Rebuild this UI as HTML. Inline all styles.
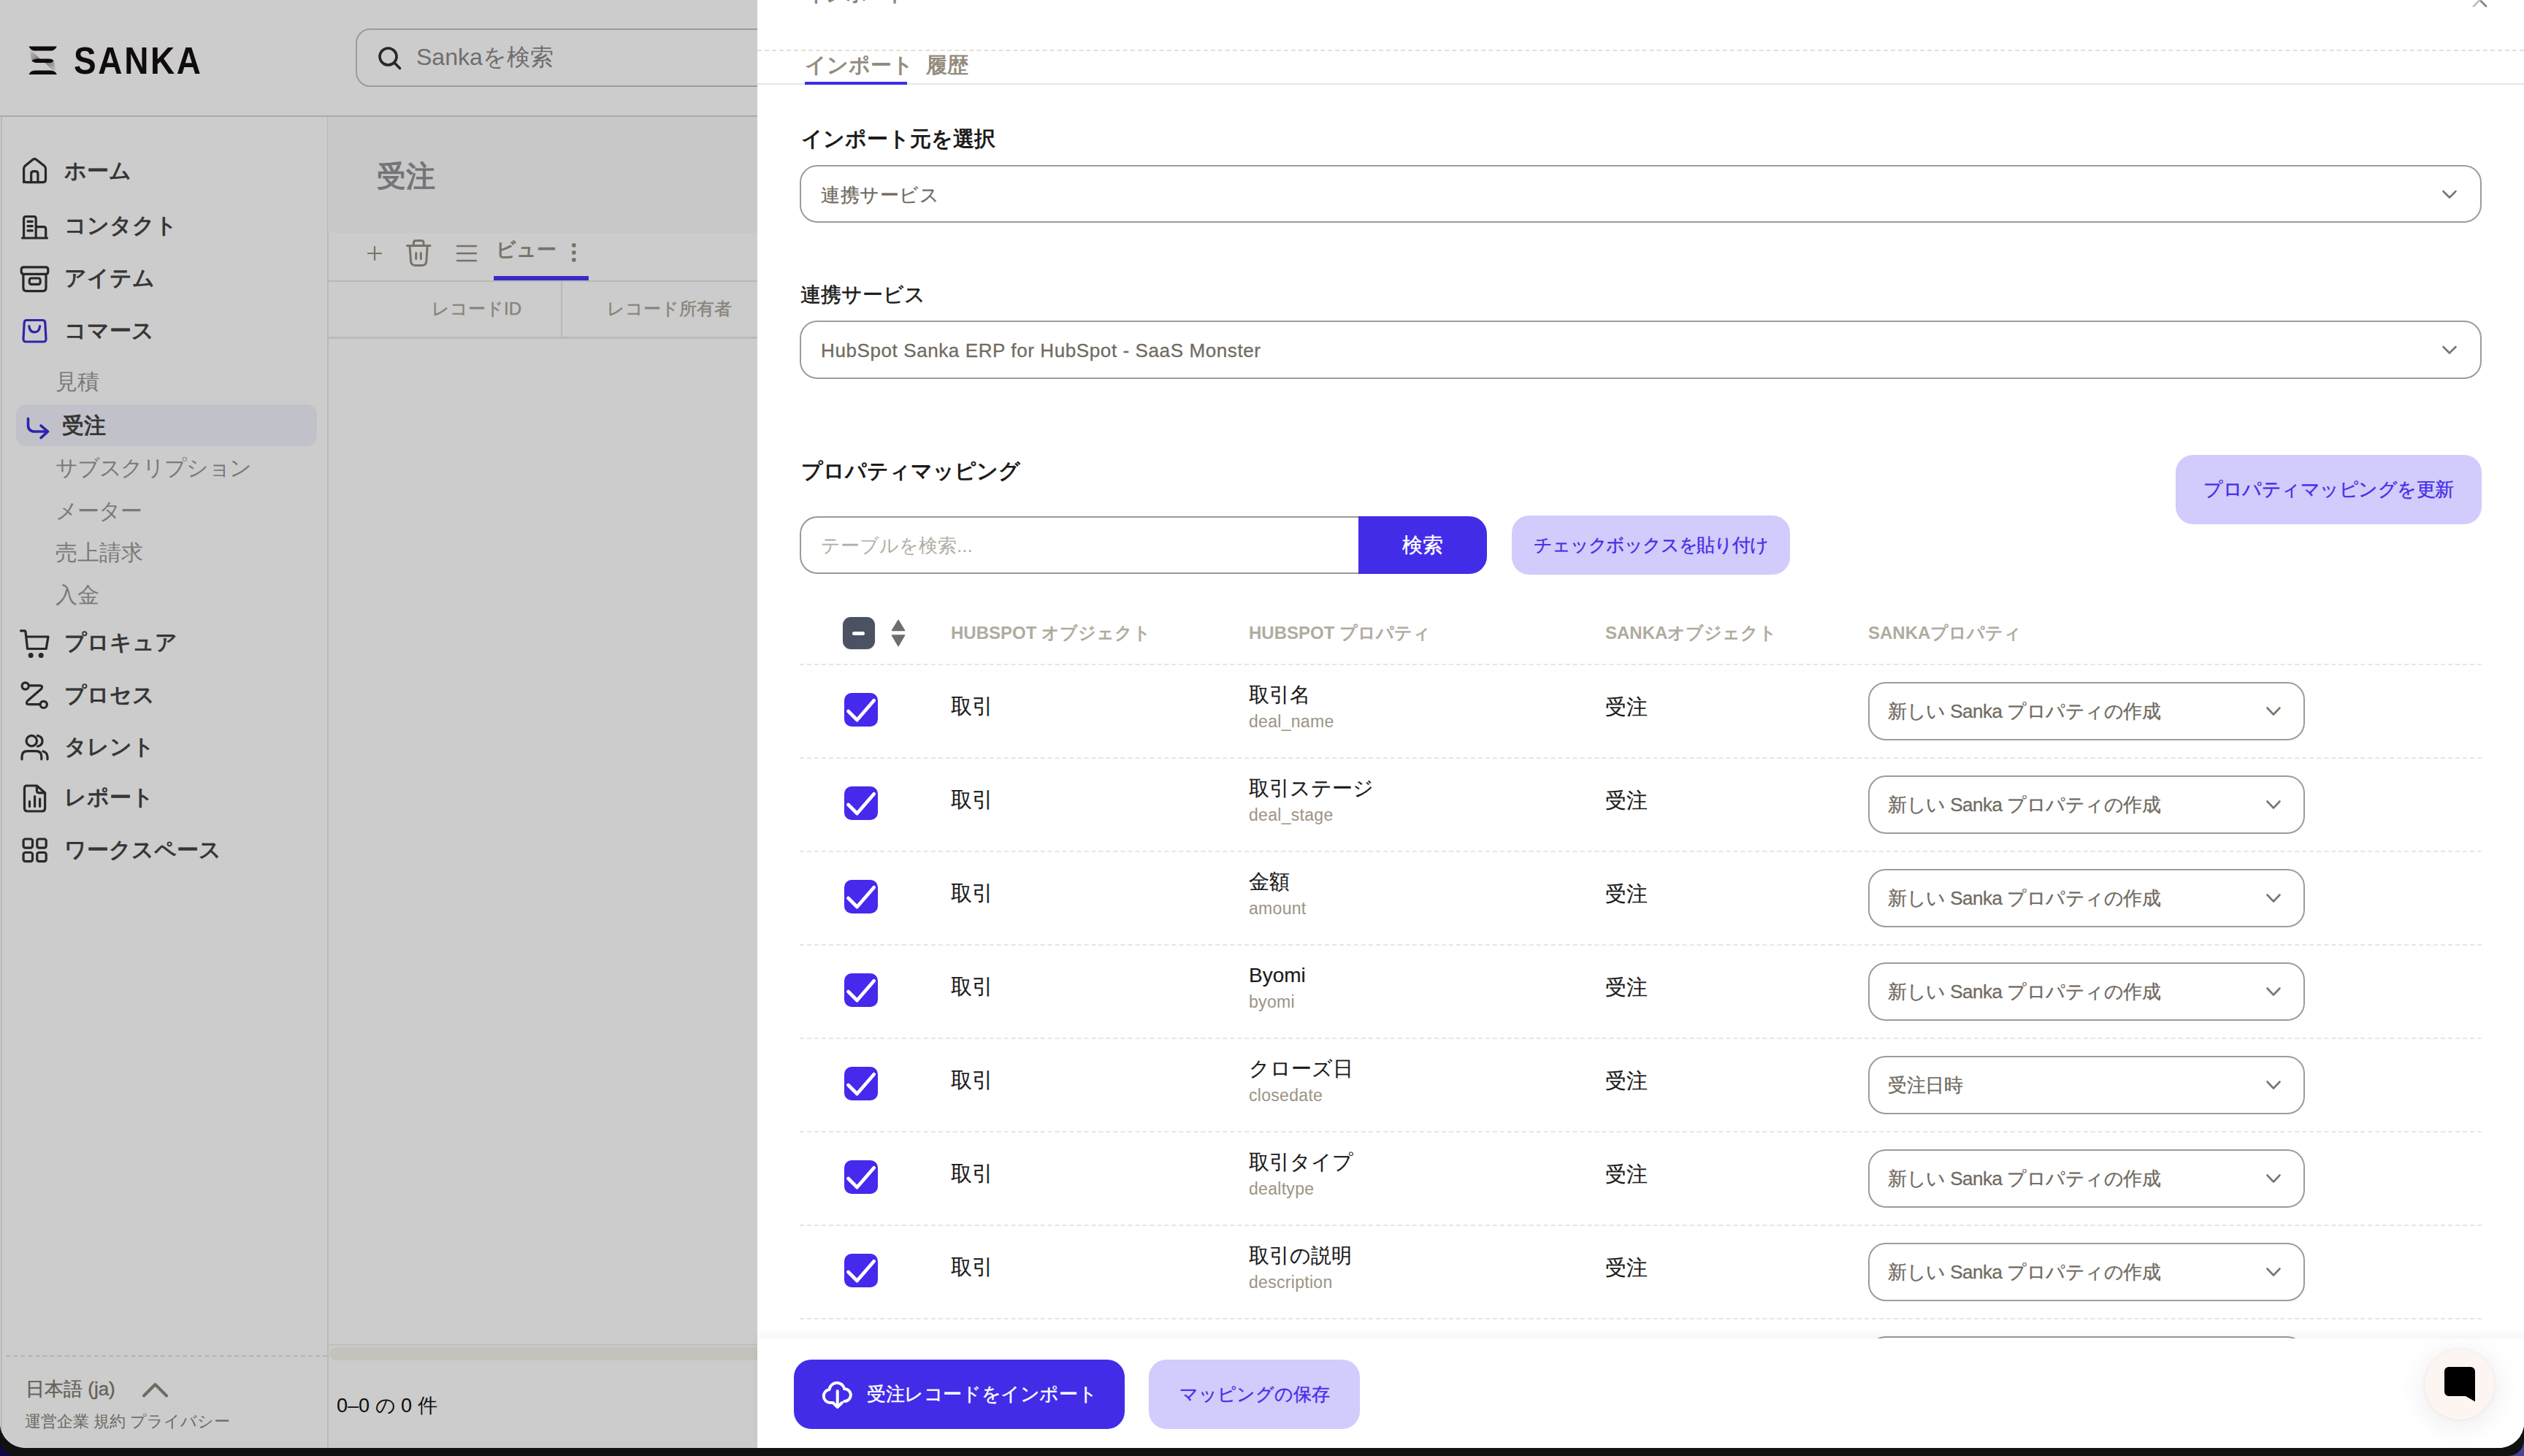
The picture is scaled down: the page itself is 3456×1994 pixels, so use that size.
<!DOCTYPE html>
<html lang="ja">
<head>
<meta charset="utf-8">
<style>
*{box-sizing:border-box;margin:0;padding:0}
html,body{width:3456px;height:1994px;overflow:hidden;background:#111}
body{position:relative;font-family:"Liberation Sans",sans-serif;}
.a{position:absolute;white-space:nowrap}
#win{position:absolute;left:0;top:0;width:3456px;height:1983px;border-radius:0 0 35px 35px;overflow:hidden;background:#fff}
#app{position:absolute;left:0;top:0;width:3456px;height:1983px;background:#fff}
#dim{position:absolute;left:0;top:0;width:3456px;height:1983px;background:rgba(0,0,0,0.2)}
#panel{position:absolute;left:1037px;top:0;width:2419px;height:1983px;background:#fff}
.nav{font-size:30px;font-weight:bold;color:#444;line-height:40px}
.sub{font-size:30px;color:#999;line-height:40px}
.ic{position:absolute}
.dd{position:absolute;border:2px solid #9d9c99;border-radius:24px;background:#fff}
.chev{position:absolute}
.hdr{font-size:24px;font-weight:bold;color:#b1ab9f;line-height:32px}
.dash{position:absolute;height:0;border-top:2px dashed #e6e6e6}
.cb{position:absolute;width:46px;height:46px;border-radius:10px;background:#4529ec}
.obj{font-size:29px;color:#1a1a1a;line-height:40px;-webkit-text-stroke:0.15px #1a1a1a}
.pname{font-size:28px;color:#1a1a1a;line-height:36px;-webkit-text-stroke:0.15px #1a1a1a}
.pkey{font-size:23px;color:#9c9383;line-height:28px;letter-spacing:0.3px;margin-top:1px}
.h{font-size:29px;font-weight:bold;color:#1c1b19;line-height:40px}
.lbl{font-size:28px;color:#1c1b19;line-height:40px;-webkit-text-stroke:0.5px #1c1b19}
.ddt{font-size:26px;color:#716b62;line-height:40px;letter-spacing:0.6px;-webkit-text-stroke:0.3px #716b62}
.btnl{background:#d1ccfb;color:#472ee8;-webkit-text-stroke:0.4px #472ee8;font-size:26px;border-radius:24px;display:flex;align-items:center;justify-content:center}
.btnp{background:#432ce8;color:#fff;-webkit-text-stroke:0.4px #fff;font-size:28px;border-radius:24px;display:flex;align-items:center;justify-content:center}
</style>
</head>
<body>
<div class="a" style="left:0;top:1954px;width:40px;height:40px;background:#0c0845"></div>
<div class="a" style="left:3416px;top:1954px;width:40px;height:40px;background:#4a4190"></div>
<div class="a" style="left:0;top:0;width:3456px;height:1994px;background:#111;border-radius:0 0 22px 22px"></div>
<div id="win">
 <div id="app">
  <!-- header -->
  <div class="a" style="left:0;top:158px;width:3456px;height:2px;background:#d6d6d6"></div>
    <div class="a" style="left:101px;top:56px;font-size:51px;font-weight:bold;letter-spacing:3px;color:#150f0e;line-height:56px;transform:scaleX(0.9);transform-origin:0 0">SANKA</div>
  <div class="a" style="left:487px;top:39px;width:1200px;height:80px;border:2px solid #c4c4c4;border-radius:20px"></div>
    <div class="a" style="left:570px;top:58px;font-size:32px;color:#8a8a8a;line-height:40px">Sankaを検索</div>
  <!-- sidebar -->
  <div class="a" style="left:448px;top:160px;width:2px;height:1823px;background:#e8e8e8"></div>
  <div class="a" style="left:1px;top:160px;width:2px;height:1823px;background:#e6e6e6"></div>
  <div class="a nav" style="left:88px;top:214px">ホーム</div>
  <div class="a nav" style="left:88px;top:289px">コンタクト</div>
  <div class="a nav" style="left:88px;top:361px">アイテム</div>
  <div class="a nav" style="left:88px;top:433px">コマース</div>
  <div class="a sub" style="left:76px;top:503px">見積</div>
  <div class="a" style="left:22px;top:554px;width:412px;height:57px;background:#f2f2fd;border-radius:14px"></div>
  <div class="a nav" style="left:85px;top:563px">受注</div>
  <div class="a sub" style="left:76px;top:621px;letter-spacing:-1.2px">サブスクリプション</div>
  <div class="a sub" style="left:76px;top:680px;letter-spacing:-1px">メーター</div>
  <div class="a sub" style="left:76px;top:737px">売上請求</div>
  <div class="a sub" style="left:76px;top:795px">入金</div>
  <div class="a nav" style="left:88px;top:860px">プロキュア</div>
  <div class="a nav" style="left:88px;top:932px">プロセス</div>
  <div class="a nav" style="left:88px;top:1003px">タレント</div>
  <div class="a nav" style="left:88px;top:1072px">レポート</div>
  <div class="a nav" style="left:88px;top:1144px">ワークスペース</div>
  <div class="a" style="left:8px;top:1856px;width:440px;border-top:2px dashed #e0e0e0"></div>
  <div class="a" style="left:35px;top:1884px;font-size:26px;color:#7f7a6f;line-height:36px;-webkit-text-stroke:0.4px #7f7a6f">日本語 (ja)</div>
  <div class="a" style="left:34px;top:1931px;font-size:22px;color:#8a857a;line-height:32px">運営企業 規約 プライバシー</div>
  <!-- main -->
  <div class="a" style="left:449px;top:160px;width:3007px;height:159px;background:#fafafa"></div>
  <div class="a" style="left:516px;top:216px;font-size:40px;font-weight:bold;color:#919196;line-height:50px">受注</div>
  <div class="a" style="left:449px;top:384px;width:3007px;height:2px;background:#e6e6e6"></div>
  <div class="a" style="left:676px;top:378px;width:130px;height:6px;background:#4836f4"></div>
  <div class="a" style="left:679px;top:322px;font-size:27px;font-weight:bold;color:#978f83;line-height:40px">ビュー</div>
  <div class="a" style="left:449px;top:461px;width:3007px;height:3px;background:#e9e9e9"></div>
  <div class="a" style="left:768px;top:386px;width:2px;height:76px;background:#e6e6e6"></div>
  <div class="a" style="left:591px;top:407px;font-size:24px;color:#aca59a;line-height:32px;-webkit-text-stroke:0.4px #aca59a">レコードID</div>
  <div class="a" style="left:831px;top:407px;font-size:24px;color:#aca59a;line-height:32px;-webkit-text-stroke:0.4px #aca59a">レコード所有者</div>
  <div class="a" style="left:449px;top:1841px;width:3007px;height:2px;background:#eeeeee"></div>
  <div class="a" style="left:451px;top:1845px;width:3000px;height:18px;background:#f7f3ec;border-radius:9px"></div>
  <div class="a" style="left:461px;top:1905px;font-size:27px;color:#111;line-height:40px">0–0 の 0 件</div>
  <svg class="ic" style="left:0;top:0" width="1037" height="1983" viewBox="0 0 1037 1983">
   <defs><linearGradient id="lg1" x1="0" y1="0" x2="1" y2="1"><stop offset="0" stop-color="#f4f4f4"/><stop offset="1" stop-color="#8a8a8a"/></linearGradient><linearGradient id="lg2" x1="0" y1="0" x2="1" y2="1"><stop offset="0" stop-color="#8a8a8a"/><stop offset="1" stop-color="#f0f0f0"/></linearGradient></defs>
   <path d="M40.6 69.4L44 70L55 80.6L43.6 84Z" fill="url(#lg1)"/>
   <path d="M61.5 85.8L73.8 83.5L76 96.6L72 96.4Z" fill="url(#lg2)"/>
   <path d="M39.3 63.4H77.9L76 66.5Q74 69.6 68 69.6H49Q43 69.6 41.5 66.5Z" fill="#150f0e"/>
   <path d="M43.5 83.2Q46 80.4 51 80.4H67Q72 80.4 73.3 83.2Q72 86 67 86H51Q46 86 43.5 83.2Z" fill="#150f0e"/>
   <path d="M39.3 102H77.9L76 99Q74 96.4 68 96.4H49Q43 96.4 41.5 99Z" fill="#150f0e"/>
   <g fill="none" stroke="#333" stroke-width="3.2" stroke-linecap="round" stroke-linejoin="round">
    <circle cx="531.5" cy="77.5" r="11.5" stroke-width="3.6"/><path d="M540 86l7.5 7.5" stroke-width="3.6"/>
    <path d="M32.6 249.6V231Q32.6 228.6 34.5 227L45 218.5Q47.3 216.8 49.6 218.5L60.5 227Q62.5 228.6 62.5 231V246Q62.5 249.6 59 249.6H36Q32.6 249.6 32.6 246Z"/>
    <path d="M42.7 249.6V238Q42.7 234.6 46 234.6H48.6Q51.9 234.6 51.9 238V249.6"/>
    <path d="M30.5 326H64.5 M32.6 326V299.5Q32.6 296.5 35.6 296.5H46.2Q49.2 296.5 49.2 299.5V326 M49.2 310.6H59.7Q62.7 310.6 62.7 313.6V326 M38 303.3H44.3 M38 309.6H44.3 M38 315.9H44.3"/>
    <path d="M32.5 365.8H62.5Q65.8 365.8 65.8 369V372Q65.8 375.4 62.5 375.4H32.5Q29.2 375.4 29.2 372V369Q29.2 365.8 32.5 365.8Z M31.9 375.4V394Q31.9 398.6 36.5 398.6H58.4Q63 398.6 63 394V375.4 M42.5 381H53Q55.2 381 55.2 385.1Q55.2 389.3 53 389.3H42.5Q40.2 389.3 40.2 385.1Q40.2 381 42.5 381Z"/>
    <path d="M36.5 438.5H58Q61.6 438.5 61.8 442L63 464Q63.2 468 59.5 468H35.5Q31.8 468 32 464L33.2 442Q33.4 438.5 36.5 438.5Z M39.8 446.5Q40.5 454.8 47.2 454.8Q54 454.8 54.6 446.5" stroke="#3a2ed8"/>
    <path d="M38.5 573.2V582Q38.5 591 47.5 591H65.6 M56 582.8L65.6 591 56 599.6" stroke="#3a2ed8" stroke-width="3.6"/>
    <path d="M28.5 863.8H33.5Q34.8 863.8 35 865.5L37.6 888.5H63.2L66 872H35.6"/>
    <circle cx="42.2" cy="897.4" r="1.9" fill="#333"/><circle cx="56.2" cy="897.4" r="1.9" fill="#333"/>
    <circle cx="34.7" cy="939.5" r="4.6"/><circle cx="59.7" cy="964.9" r="4.6"/>
    <path d="M40.5 938.8H54.3Q59.5 938.8 56.7 943.3L37.5 960Q34.5 964.6 39.7 964.6H53.5"/>
    <circle cx="43.3" cy="1014.6" r="7.2"/>
    <path d="M30 1039.8V1036.5Q30 1028.7 37.6 1028.7H49.2Q56.8 1028.7 56.8 1036.5V1039.8 M51.5 1007.5Q58 1009 58 1014.8Q58 1020.6 51.5 1022.2 M65 1039.8V1036.5Q64.7 1030.5 59 1029"/>
    <path d="M36.6 1076H50.4L61.6 1085.8V1107Q61.6 1111 57.6 1111H37.6Q33.5 1111 33.5 1107V1079.5Q33.5 1076 36.6 1076Z M50.4 1076V1082.5Q50.4 1085.8 53.5 1085.8H61.6 M40.5 1104.5V1097.5 M47.6 1104.5V1090.5 M54.6 1104.5V1094"/>
    <rect x="32.1" y="1149" width="12.4" height="12.2" rx="2.6"/><rect x="50.8" y="1149" width="12.4" height="12.2" rx="2.6"/>
    <rect x="32.1" y="1167.5" width="12.4" height="12.2" rx="2.6"/><rect x="50.8" y="1167.5" width="12.4" height="12.2" rx="2.6"/>
    <path d="M197 1911.5L212.5 1896 228 1911.5" stroke="#8a857a" stroke-width="4"/>
   </g>
   <g fill="none" stroke="#978f83" stroke-linecap="round" stroke-linejoin="round">
    <path d="M513 338V356 M504 347H522" stroke-width="2.2"/>
    <path d="M557.5 336.5H589 M561 336.5L562.6 358Q563 363.4 568.5 363.4H578Q583.4 363.4 583.8 358L585.2 336.5 M566.5 336V332.5Q566.5 329.6 569.5 329.6H577Q580 329.6 580 332.5V336 M569.7 346.5V354.5 M576.3 346.5V354.5" stroke-width="3"/>
    <path d="M626 337H652 M626 347H652 M626 357H652" stroke-width="2.4"/>
   </g>
   <g fill="#978f83"><circle cx="785.8" cy="335.8" r="2.9"/><circle cx="785.8" cy="345.8" r="2.9"/><circle cx="785.8" cy="355.8" r="2.9"/></g>
  </svg>
 </div>
 <div id="dim"></div>

 <div id="panel">
  <div class="a" style="left:66px;top:-28px;font-size:27px;font-weight:bold;color:#8b8378;line-height:40px">インポート</div>
  <svg class="ic" style="left:2338px;top:-20px" width="40" height="40" viewBox="0 0 40 40"><path d="M12 11.5l17 17" stroke="#8d8579" stroke-width="2.8" stroke-linecap="round"/><path d="M29 11.5l-17 17" stroke="#c4c0b8" stroke-width="2.8" stroke-linecap="round"/></svg>
  <div class="dash" style="left:0;top:68px;width:2419px;border-top-color:#e4e0d8"></div>
  <div class="a" style="left:0;top:114px;width:2419px;height:2px;background:#e6e6e6"></div>
  <div class="a" style="left:65px;top:69px;font-size:29px;font-weight:bold;color:#948c7f;line-height:40px">インポート</div>
  <div class="a" style="left:65px;top:112px;width:140px;height:4px;background:#3b2de8"></div>
  <div class="a" style="left:231px;top:69px;font-size:29px;font-weight:bold;color:#948c7f;line-height:40px">履歴</div>
  <div class="a h" style="left:60px;top:170px">インポート元を選択</div>
  <div class="dd" style="left:58px;top:226px;width:2303px;height:79px"><div class="a ddt" style="left:27px;top:19px">連携サービス</div>
   <svg class="chev" style="left:2246px;top:31px" width="22" height="16" viewBox="0 0 22 16"><path d="M2.5 3l8.5 8.5 8.5-8.5" fill="none" stroke="#7d776b" stroke-width="2.6" stroke-linecap="round" stroke-linejoin="round"/></svg></div>
  <div class="a lbl" style="left:59px;top:384px">連携サービス</div>
  <div class="dd" style="left:58px;top:439px;width:2303px;height:80px"><div class="a ddt" style="left:27px;top:19px">HubSpot Sanka ERP for HubSpot - SaaS Monster</div>
   <svg class="chev" style="left:2246px;top:31px" width="22" height="16" viewBox="0 0 22 16"><path d="M2.5 3l8.5 8.5 8.5-8.5" fill="none" stroke="#7d776b" stroke-width="2.6" stroke-linecap="round" stroke-linejoin="round"/></svg></div>
  <div class="a h" style="left:60px;top:625px">プロパティマッピング</div>
  <div class="a btnl" style="left:1942px;top:623px;width:419px;height:95px;letter-spacing:-0.5px">プロパティマッピングを更新</div>
  <div class="a" style="left:58px;top:707px;width:767px;height:79px;border:2px solid #9b9996;border-right:none;border-radius:24px 0 0 24px"></div>
  <div class="a" style="left:87px;top:727px;font-size:26px;color:#b3ada3;line-height:40px">テーブルを検索...</div>
  <div class="a btnp" style="left:823px;top:707px;width:176px;height:79px;border-radius:0 24px 24px 0">検索</div>
  <div class="a btnl" style="left:1033px;top:706px;width:381px;height:81px;font-size:25px;letter-spacing:-1.2px">チェックボックスを貼り付け</div>
  <div class="a" style="left:117px;top:845px;width:44px;height:44px;border-radius:11px;background:#4b5262;box-shadow:0 1px 2px rgba(0,0,0,0.12)"><div class="a" style="left:13px;top:20px;width:17px;height:5px;border-radius:3px;background:#fff"></div></div>
  <svg class="ic" style="left:183px;top:848px" width="20" height="38" viewBox="0 0 20 38"><path d="M10 1.5L18.5 15.5H1.5Z M10 36.5L18.5 22H1.5Z" fill="#6e6e6e" stroke="#6e6e6e" stroke-width="1.5" stroke-linejoin="round"/></svg>
  <div class="a hdr" style="left:265px;top:851px">HUBSPOT オブジェクト</div>
  <div class="a hdr" style="left:673px;top:851px">HUBSPOT プロパティ</div>
  <div class="a hdr" style="left:1161px;top:851px">SANKAオブジェクト</div>
  <div class="a hdr" style="left:1521px;top:851px">SANKAプロパティ</div>
  <div class="dash" style="left:58px;top:909px;width:2303px"></div>
  <div class="cb" style="left:119px;top:949px"><svg width="46" height="46" viewBox="0 0 46 46"><path d="M5.5 25l12 12 23.2-26.8" fill="none" stroke="#fff" stroke-width="4.8" stroke-linecap="round" stroke-linejoin="round"/></svg></div>
  <div class="a obj" style="left:265px;top:947px">取引</div>
  <div class="a pname" style="left:673px;top:934px">取引名</div>
  <div class="a pkey" style="left:673px;top:973px">deal_name</div>
  <div class="a obj" style="left:1161px;top:948px">受注</div>
  <div class="dd" style="left:1521px;top:934px;width:598px;height:80px"><div class="a ddt" style="left:25px;top:18px;letter-spacing:-0.5px">新しい Sanka プロパティの作成</div><svg class="chev" style="left:542px;top:30px" width="22" height="17" viewBox="0 0 22 17"><path d="M2.5 3.5l8.5 9 8.5-9" fill="none" stroke="#7d776b" stroke-width="2.6" stroke-linecap="round" stroke-linejoin="round"/></svg></div>
  <div class="dash" style="left:58px;top:1037px;width:2303px"></div>
  <div class="cb" style="left:119px;top:1077px"><svg width="46" height="46" viewBox="0 0 46 46"><path d="M5.5 25l12 12 23.2-26.8" fill="none" stroke="#fff" stroke-width="4.8" stroke-linecap="round" stroke-linejoin="round"/></svg></div>
  <div class="a obj" style="left:265px;top:1075px">取引</div>
  <div class="a pname" style="left:673px;top:1062px">取引ステージ</div>
  <div class="a pkey" style="left:673px;top:1101px">deal_stage</div>
  <div class="a obj" style="left:1161px;top:1076px">受注</div>
  <div class="dd" style="left:1521px;top:1062px;width:598px;height:80px"><div class="a ddt" style="left:25px;top:18px;letter-spacing:-0.5px">新しい Sanka プロパティの作成</div><svg class="chev" style="left:542px;top:30px" width="22" height="17" viewBox="0 0 22 17"><path d="M2.5 3.5l8.5 9 8.5-9" fill="none" stroke="#7d776b" stroke-width="2.6" stroke-linecap="round" stroke-linejoin="round"/></svg></div>
  <div class="dash" style="left:58px;top:1165px;width:2303px"></div>
  <div class="cb" style="left:119px;top:1205px"><svg width="46" height="46" viewBox="0 0 46 46"><path d="M5.5 25l12 12 23.2-26.8" fill="none" stroke="#fff" stroke-width="4.8" stroke-linecap="round" stroke-linejoin="round"/></svg></div>
  <div class="a obj" style="left:265px;top:1203px">取引</div>
  <div class="a pname" style="left:673px;top:1190px">金額</div>
  <div class="a pkey" style="left:673px;top:1229px">amount</div>
  <div class="a obj" style="left:1161px;top:1204px">受注</div>
  <div class="dd" style="left:1521px;top:1190px;width:598px;height:80px"><div class="a ddt" style="left:25px;top:18px;letter-spacing:-0.5px">新しい Sanka プロパティの作成</div><svg class="chev" style="left:542px;top:30px" width="22" height="17" viewBox="0 0 22 17"><path d="M2.5 3.5l8.5 9 8.5-9" fill="none" stroke="#7d776b" stroke-width="2.6" stroke-linecap="round" stroke-linejoin="round"/></svg></div>
  <div class="dash" style="left:58px;top:1293px;width:2303px"></div>
  <div class="cb" style="left:119px;top:1333px"><svg width="46" height="46" viewBox="0 0 46 46"><path d="M5.5 25l12 12 23.2-26.8" fill="none" stroke="#fff" stroke-width="4.8" stroke-linecap="round" stroke-linejoin="round"/></svg></div>
  <div class="a obj" style="left:265px;top:1331px">取引</div>
  <div class="a pname" style="left:673px;top:1318px">Byomi</div>
  <div class="a pkey" style="left:673px;top:1357px">byomi</div>
  <div class="a obj" style="left:1161px;top:1332px">受注</div>
  <div class="dd" style="left:1521px;top:1318px;width:598px;height:80px"><div class="a ddt" style="left:25px;top:18px;letter-spacing:-0.5px">新しい Sanka プロパティの作成</div><svg class="chev" style="left:542px;top:30px" width="22" height="17" viewBox="0 0 22 17"><path d="M2.5 3.5l8.5 9 8.5-9" fill="none" stroke="#7d776b" stroke-width="2.6" stroke-linecap="round" stroke-linejoin="round"/></svg></div>
  <div class="dash" style="left:58px;top:1421px;width:2303px"></div>
  <div class="cb" style="left:119px;top:1461px"><svg width="46" height="46" viewBox="0 0 46 46"><path d="M5.5 25l12 12 23.2-26.8" fill="none" stroke="#fff" stroke-width="4.8" stroke-linecap="round" stroke-linejoin="round"/></svg></div>
  <div class="a obj" style="left:265px;top:1459px">取引</div>
  <div class="a pname" style="left:673px;top:1446px">クローズ日</div>
  <div class="a pkey" style="left:673px;top:1485px">closedate</div>
  <div class="a obj" style="left:1161px;top:1460px">受注</div>
  <div class="dd" style="left:1521px;top:1446px;width:598px;height:80px"><div class="a ddt" style="left:25px;top:18px;letter-spacing:-0.5px">受注日時</div><svg class="chev" style="left:542px;top:30px" width="22" height="17" viewBox="0 0 22 17"><path d="M2.5 3.5l8.5 9 8.5-9" fill="none" stroke="#7d776b" stroke-width="2.6" stroke-linecap="round" stroke-linejoin="round"/></svg></div>
  <div class="dash" style="left:58px;top:1549px;width:2303px"></div>
  <div class="cb" style="left:119px;top:1589px"><svg width="46" height="46" viewBox="0 0 46 46"><path d="M5.5 25l12 12 23.2-26.8" fill="none" stroke="#fff" stroke-width="4.8" stroke-linecap="round" stroke-linejoin="round"/></svg></div>
  <div class="a obj" style="left:265px;top:1587px">取引</div>
  <div class="a pname" style="left:673px;top:1574px">取引タイプ</div>
  <div class="a pkey" style="left:673px;top:1613px">dealtype</div>
  <div class="a obj" style="left:1161px;top:1588px">受注</div>
  <div class="dd" style="left:1521px;top:1574px;width:598px;height:80px"><div class="a ddt" style="left:25px;top:18px;letter-spacing:-0.5px">新しい Sanka プロパティの作成</div><svg class="chev" style="left:542px;top:30px" width="22" height="17" viewBox="0 0 22 17"><path d="M2.5 3.5l8.5 9 8.5-9" fill="none" stroke="#7d776b" stroke-width="2.6" stroke-linecap="round" stroke-linejoin="round"/></svg></div>
  <div class="dash" style="left:58px;top:1677px;width:2303px"></div>
  <div class="cb" style="left:119px;top:1717px"><svg width="46" height="46" viewBox="0 0 46 46"><path d="M5.5 25l12 12 23.2-26.8" fill="none" stroke="#fff" stroke-width="4.8" stroke-linecap="round" stroke-linejoin="round"/></svg></div>
  <div class="a obj" style="left:265px;top:1715px">取引</div>
  <div class="a pname" style="left:673px;top:1702px">取引の説明</div>
  <div class="a pkey" style="left:673px;top:1741px">description</div>
  <div class="a obj" style="left:1161px;top:1716px">受注</div>
  <div class="dd" style="left:1521px;top:1702px;width:598px;height:80px"><div class="a ddt" style="left:25px;top:18px;letter-spacing:-0.5px">新しい Sanka プロパティの作成</div><svg class="chev" style="left:542px;top:30px" width="22" height="17" viewBox="0 0 22 17"><path d="M2.5 3.5l8.5 9 8.5-9" fill="none" stroke="#7d776b" stroke-width="2.6" stroke-linecap="round" stroke-linejoin="round"/></svg></div>
  <div class="dash" style="left:58px;top:1805px;width:2303px"></div>
  <div class="cb" style="left:119px;top:1845px"><svg width="46" height="46" viewBox="0 0 46 46"><path d="M5.5 25l12 12 23.2-26.8" fill="none" stroke="#fff" stroke-width="4.8" stroke-linecap="round" stroke-linejoin="round"/></svg></div>
  <div class="a obj" style="left:265px;top:1843px">取引</div>
  <div class="a pname" style="left:673px;top:1830px">取引担当者のメール</div>
  <div class="a pkey" style="left:673px;top:1869px">owner_email</div>
  <div class="a obj" style="left:1161px;top:1844px">受注</div>
  <div class="dd" style="left:1521px;top:1830px;width:598px;height:80px"><div class="a ddt" style="left:25px;top:18px;letter-spacing:-0.5px">新しい Sanka プロパティの作成</div><svg class="chev" style="left:542px;top:30px" width="22" height="17" viewBox="0 0 22 17"><path d="M2.5 3.5l8.5 9 8.5-9" fill="none" stroke="#7d776b" stroke-width="2.6" stroke-linecap="round" stroke-linejoin="round"/></svg></div>
  <div class="a" style="left:0;top:1833px;width:2419px;height:150px;background:#fff;box-shadow:0 -6px 10px rgba(0,0,0,0.04)">
   <div class="a btnp" style="left:50px;top:29px;width:453px;height:95px;justify-content:flex-start;padding-left:100px;font-size:26px;letter-spacing:-0.4px">受注レコードをインポート</div>
   <svg class="ic" style="left:88px;top:55px" width="44" height="44" viewBox="0 0 44 44"><path d="M14 33h-2.5a9 9 0 0 1-1-17.9a10.5 10.5 0 0 1 20.7-1.1a8.5 8.5 0 0 1 1.5 16.9h-1.5" fill="none" stroke="#fff" stroke-width="4" stroke-linecap="round" stroke-linejoin="round"/><path d="M21.7 17v22M15.5 33l6.2 6.2 6.2-6.2" fill="none" stroke="#fff" stroke-width="4" stroke-linecap="round" stroke-linejoin="round"/></svg>
   <div class="a btnl" style="left:536px;top:29px;width:289px;height:95px;font-size:25px">マッピングの保存</div>
   <div class="a" style="left:2283px;top:15px;width:96px;height:96px;border-radius:50%;background:#fdf5f1;box-shadow:0 0 4px rgba(0,0,0,0.07),0 6px 44px rgba(0,0,0,0.09)">
    <svg class="ic" style="left:27px;top:24px" width="42" height="48" viewBox="0 0 42 48"><path d="M6 0H36A6 6 0 0 1 42 6V47.5L29 40H6A6 6 0 0 1 0 34V6A6 6 0 0 1 6 0Z" fill="#000"/></svg>
   </div>
  </div>
 </div>

</div>
</body>
</html>
